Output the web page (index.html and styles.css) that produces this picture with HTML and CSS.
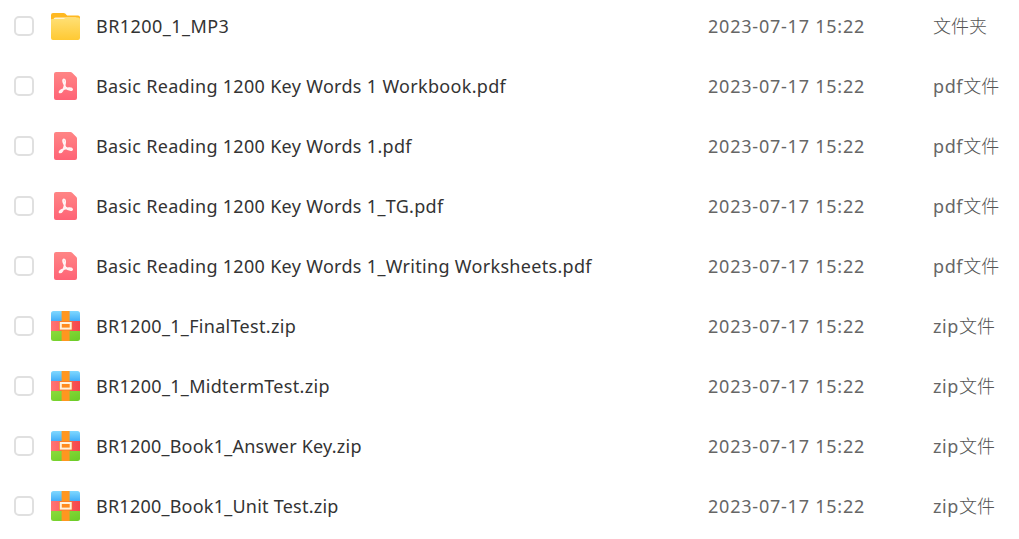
FILE: index.html
```html
<!DOCTYPE html>
<html lang="zh-CN">
<head>
    <meta charset="UTF-8">
    <meta name="viewport" content="width=device-width, initial-scale=1.0">
    <title>文件列表</title>
    <link rel="stylesheet" href="styles.css">
</head>
<body>
    <!-- icon shapes -->
    <svg class="defs" width="0" height="0">
        <linearGradient id="yellow" x1="0" y1="0" x2="0" y2="1">
            <stop offset="0" stop-color="#ffe075"/>
            <stop offset="1" stop-color="#ffc933"/>
        </linearGradient>
        <linearGradient id="pink" x1="0" y1="0" x2="0" y2="1">
            <stop offset="0" stop-color="#ff8585"/>
            <stop offset="1" stop-color="#ff6376"/>
        </linearGradient>
        <linearGradient id="blue" x1="0" y1="0" x2="0" y2="1">
            <stop offset="0" stop-color="#80d8ff"/>
            <stop offset="1" stop-color="#42aef8"/>
        </linearGradient>
        <linearGradient id="red" x1="0" y1="0" x2="1" y2="0">
            <stop offset="0" stop-color="#ff7474"/>
            <stop offset="1" stop-color="#f6464b"/>
        </linearGradient>
        <linearGradient id="green" x1="0" y1="0" x2="1" y2="1">
            <stop offset="0" stop-color="#8bdb3c"/>
            <stop offset="1" stop-color="#6bcb27"/>
        </linearGradient>
        <symbol id="folder" viewBox="0 0 30 30">
            <path d="M0 4a2 2 0 0 1 2-2h10.5a3 3 0 0 1 2 .8l1.1 1.1a2 2 0 0 0 1.400.6H27a2 2 0 0 1 2 2V15H0z" fill="#ffb820"/>
            <path d="M2.5 8.5q0-2 2-2h20q2 0 2 2V12h-24z" fill="#fff3cf"/>
            <path d="M0 8.800q0-.8.8-.8h11q1 0 1.800-.5l1-.6q.8-.5 1.800-.5H27a2 2 0 0 1 2 2V27a2 2 0 0 1-2 2H2a2 2 0 0 1-2-2z" fill="url(#yellow)"/>
        </symbol>
        <symbol id="pdf" viewBox="0 0 30 30">
            <path d="M5 1h14.500q.8 0 1.400.6l4.500 4.500q.6.6.6 1.400V27a2 2 0 0 1-2 2H5a2 2 0 0 1-2-2V3a2 2 0 0 1 2-2z" fill="url(#pink)"/>
            <path d="M13 8.300c-1.600.2-.9 2.700.3 5.200q.6 1.600 1.400 3.100 2.200 2.600 5.200 2.600c2-.1 1.500-1.900-.6-2-2.800-.2-6 .4-8.400 1.600-2.600 1.400-2.900 2.700-1.800 2.700 1.800 0 3.700-3.800 4.500-7 .9-3.500.8-6.300-.6-6.200z" fill="none" stroke="#fff3f3" stroke-width="1.700" stroke-linejoin="round"/>
        </symbol>
        <symbol id="zip" viewBox="0 0 30 30">
            <path d="M0 10V2.500A2.500 2.500 0 0 1 2.500 0h24A2.500 2.500 0 0 1 29 2.500V10z" fill="url(#blue)"/>
            <path d="M0 10h29v10H0z" fill="url(#red)"/>
            <path d="M0 20h29v7.500a2.500 2.500 0 0 1-2.500 2.500h-24A2.500 2.500 0 0 1 0 27.500z" fill="url(#green)"/>
            <path d="M10.600 0h8v30h-8z" fill="#ff9620"/>
            <rect x="8" y="10.300" width="13.300" height="9.200" rx="1" fill="#f57b2b"/>
            <rect x="9.800" y="12" width="9.900" height="5.600" fill="#ff8a1f" stroke="#fff1dc" stroke-width="2"/>
        </symbol>
    </svg>

    <ul class="files">
        <li class="row">
            <input type="checkbox" class="check">
            <svg class="icon"><use href="#folder"/></svg>
            <span class="name wide">BR1200_1_MP3</span>
            <span class="date">2023-07-17 15:22</span>
            <span class="type">文件夹</span>
        </li>
        <li class="row">
            <input type="checkbox" class="check">
            <svg class="icon"><use href="#pdf"/></svg>
            <span class="name">Basic Reading 1200 Key Words 1 Workbook.pdf</span>
            <span class="date">2023-07-17 15:22</span>
            <span class="type"><span class="ext">pdf</span>文件</span>
        </li>
        <li class="row">
            <input type="checkbox" class="check">
            <svg class="icon"><use href="#pdf"/></svg>
            <span class="name">Basic Reading 1200 Key Words 1.pdf</span>
            <span class="date">2023-07-17 15:22</span>
            <span class="type"><span class="ext">pdf</span>文件</span>
        </li>
        <li class="row">
            <input type="checkbox" class="check">
            <svg class="icon"><use href="#pdf"/></svg>
            <span class="name">Basic Reading 1200 Key Words 1_TG.pdf</span>
            <span class="date">2023-07-17 15:22</span>
            <span class="type"><span class="ext">pdf</span>文件</span>
        </li>
        <li class="row">
            <input type="checkbox" class="check">
            <svg class="icon"><use href="#pdf"/></svg>
            <span class="name">Basic Reading 1200 Key Words 1_Writing Worksheets.pdf</span>
            <span class="date">2023-07-17 15:22</span>
            <span class="type"><span class="ext">pdf</span>文件</span>
        </li>
        <li class="row">
            <input type="checkbox" class="check">
            <svg class="icon"><use href="#zip"/></svg>
            <span class="name">BR1200_1_FinalTest.zip</span>
            <span class="date">2023-07-17 15:22</span>
            <span class="type"><span class="ext">zip</span>文件</span>
        </li>
        <li class="row">
            <input type="checkbox" class="check">
            <svg class="icon"><use href="#zip"/></svg>
            <span class="name">BR1200_1_MidtermTest.zip</span>
            <span class="date">2023-07-17 15:22</span>
            <span class="type"><span class="ext">zip</span>文件</span>
        </li>
        <li class="row">
            <input type="checkbox" class="check">
            <svg class="icon"><use href="#zip"/></svg>
            <span class="name tight">BR1200_Book1_Answer Key.zip</span>
            <span class="date">2023-07-17 15:22</span>
            <span class="type"><span class="ext">zip</span>文件</span>
        </li>
        <li class="row">
            <input type="checkbox" class="check">
            <svg class="icon"><use href="#zip"/></svg>
            <span class="name tight">BR1200_Book1_Unit Test.zip</span>
            <span class="date">2023-07-17 15:22</span>
            <span class="type"><span class="ext">zip</span>文件</span>
        </li>
    </ul>
</body>
</html>
```
FILE: styles.css
```css
*{
    margin: 0;
    padding: 0;
    box-sizing: border-box;
}
body{
    background-color: #fff;
    font-family: "Noto Sans", "Noto Sans CJK SC", sans-serif;
    font-size: 18px;
    overflow: hidden;
}
.defs{
    display: block;
}
.files{
    list-style: none;
    margin-top: -4px;
}
.row{
    display: grid;
    grid-template-columns: 37px 45px 612px 225px 1fr;
    align-items: center;
    height: 60px;
    padding-left: 14px;
    line-height: 26px;
    white-space: nowrap;
}
.check{
    appearance: none;
    width: 20px;
    height: 20px;
    border: 2px solid #e0e0e0;
    border-radius: 5px;
    background-color: #fff;
}
.icon{
    display: block;
    width: 30px;
    height: 30px;
}
.name{
    color: #333;
    letter-spacing: 0.31px;
}
.name.wide{
    letter-spacing: 0.45px;
}
.name.tight{
    letter-spacing: 0.23px;
}
.date{
    color: #666;
    letter-spacing: 0.78px;
}
.type{
    color: #555;
    font-weight: 300;
}
.type .ext{
    color: #666;
    font-weight: 400;
    letter-spacing: 0.6px;
}
```
